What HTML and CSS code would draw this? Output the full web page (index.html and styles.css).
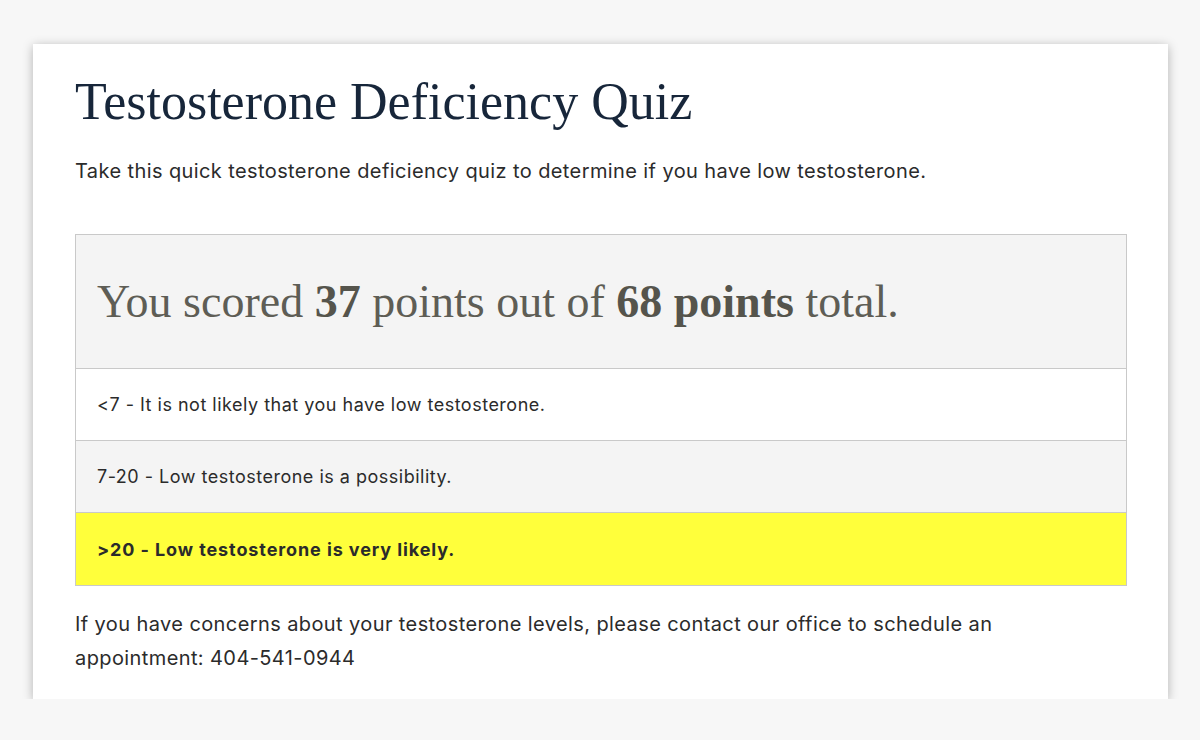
FILE: index.html
```html
<!DOCTYPE html>
<html lang="en">
<head>
    <meta charset="UTF-8">
    <meta name="viewport" content="width=device-width, initial-scale=1.0">
    <title>Testosterone Deficiency Quiz</title>
    <link rel="stylesheet" href="styles.css">
</head>
<body>
    <div class="card">
        <h1>Testosterone Deficiency Quiz</h1>
        <p class="intro">Take this quick testosterone deficiency quiz to determine if you have low testosterone.</p>

        <div class="results">
            <div class="score"><span>You scored <b>37</b> points out of <b>68 points</b> total.</span></div>
            <div class="row">&lt;7 - It is not likely that you have low testosterone.</div>
            <div class="row alt">7-20 - Low testosterone is a possibility.</div>
            <div class="row active">&gt;20 - Low testosterone is very likely.</div>
        </div>

        <p class="outro">If you have concerns about your testosterone levels, please contact our office to schedule an appointment: 404-541-0944</p>
    </div>
</body>
</html>
```

FILE: styles.css
```css
body {
    margin: 0;
    padding: 44px 32px 0 33px;
    background: #f7f7f7;
    font-family: Inter, 'Noto Sans', sans-serif;
    color: #2b2b2b;
}

.card {
    background: #ffffff;
    box-shadow: 0 2px 10px rgba(0, 0, 0, 0.28);
    padding: 30px 41px 18px 42px;
    height: 607px;
}

h1 {
    font-family: 'Liberation Serif', serif;
    font-weight: normal;
    font-size: 52px;
    color: #17263a;
    margin: 0;
    line-height: 56px;
}

.intro {
    font-size: 20px;
    letter-spacing: 0.4px;
    margin: 26px 0 48px;
    line-height: 30px;
}

.results {
    border: 1px solid #c9c9c9;
}

.score {
    background: #f4f4f4;
    font-family: 'Liberation Serif', serif;
    font-size: 46px;
    color: #5e5d55;
    height: 133px;
    padding: 0 21px;
    display: flex;
    align-items: center;
    border-bottom: 1px solid #c9c9c9;
}

.score b {
    color: #55544c;
}

.row {
    height: 71px;
    padding: 0 21px;
    display: flex;
    align-items: center;
    font-size: 18px;
    letter-spacing: 0.5px;
    border-bottom: 1px solid #c9c9c9;
}

.row:last-child {
    border-bottom: none;
}

.alt {
    background: #f4f4f4;
}

.active {
    background: #ffff3b;
    font-weight: bold;
    letter-spacing: 0.9px;
    height: 72px;
}

.outro {
    font-size: 20px;
    letter-spacing: 0.4px;
    line-height: 34px;
    margin: 21px 0 0;
}
```
